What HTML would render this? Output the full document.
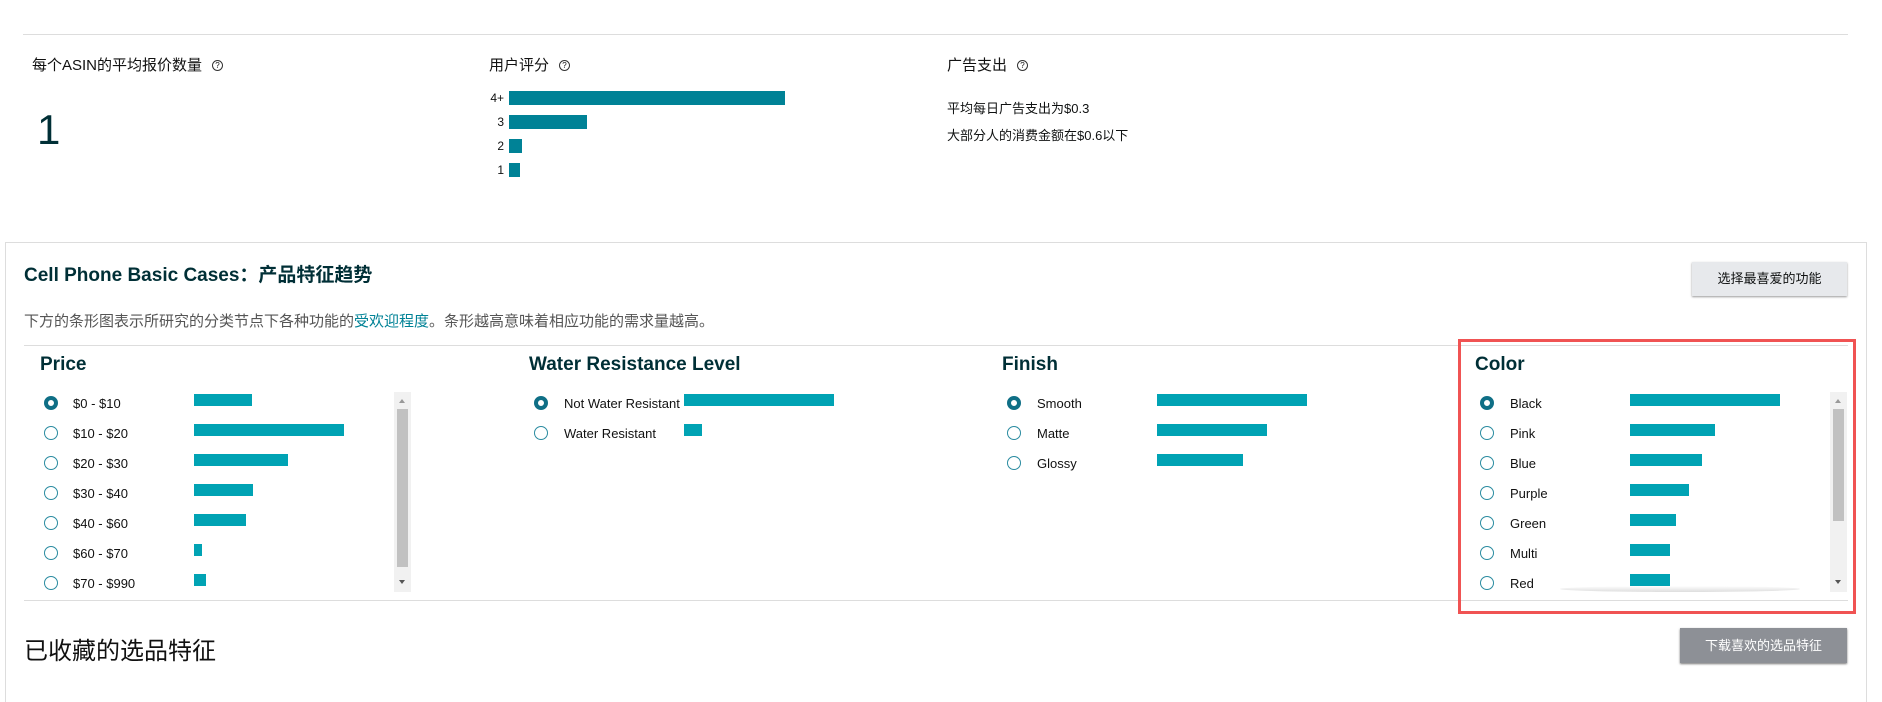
<!DOCTYPE html>
<html><head><meta charset="utf-8"><style>
*{margin:0;padding:0;box-sizing:border-box}
body{width:1882px;height:686px;background:#fff;position:relative;overflow:hidden;font-family:"Liberation Sans","Noto Sans CJK SC",sans-serif;color:#0f1111}
.a{position:absolute;white-space:nowrap}
.q{display:inline-block;width:11px;height:11px;border:1px solid #333;border-radius:50%;font-size:8px;line-height:9px;text-align:center;margin-left:10px;vertical-align:2px}
.h{font-size:15px;color:#111}
.bar{position:absolute;height:12px;background:#00a3b4}
.rb{position:absolute;height:14px;background:#008296}
.rad{position:absolute;width:14px;height:14px;border:1.5px solid #2a8ba0;border-radius:50%;background:#fff}
.rad.on{border:4px solid #0f6f86}
.lbl{position:absolute;font-size:13px;color:#111;white-space:nowrap;line-height:16px}
.ch{position:absolute;font-size:19px;font-weight:bold;color:#002f36}
.sb{position:absolute;width:17px;background:#f1f1f1}
.sb i{position:absolute;left:3px;width:11px;background:#c1c1c1}
.sb b{position:absolute;left:5px;width:0;height:0;border-left:3.5px solid transparent;border-right:3.5px solid transparent}
</style></head><body>
<div class="a" style="left:23px;top:34px;width:1825px;height:1px;background:#ddd"></div>
<div class="a h" style="left:32px;top:54px">每个ASIN的平均报价数量<span class="q">?</span></div>
<div class="a" style="left:37px;top:106px;font-size:42px;color:#002f36">1</div>
<div class="a h" style="left:489px;top:54px">用户评分<span class="q">?</span></div>
<div class="a" style="left:470px;top:91px;width:34px;text-align:right;font-size:12px;line-height:14px">4+</div>
<div class="a" style="left:470px;top:115px;width:34px;text-align:right;font-size:12px;line-height:14px">3</div>
<div class="a" style="left:470px;top:139px;width:34px;text-align:right;font-size:12px;line-height:14px">2</div>
<div class="a" style="left:470px;top:163px;width:34px;text-align:right;font-size:12px;line-height:14px">1</div>
<div class="rb" style="left:509px;top:91px;width:276px"></div>
<div class="rb" style="left:509px;top:115px;width:78px"></div>
<div class="rb" style="left:509px;top:139px;width:13px"></div>
<div class="rb" style="left:509px;top:163px;width:11px"></div>
<div class="a h" style="left:947px;top:54px">广告支出<span class="q">?</span></div>
<div class="a" style="left:947px;top:98px;font-size:13px">平均每日广告支出为$0.3</div>
<div class="a" style="left:947px;top:125px;font-size:13px">大部分人的消费金额在$0.6以下</div>

<div class="a" style="left:5px;top:242px;width:1862px;height:460px;border:1px solid #ddd;border-bottom:none"></div>
<div class="a" style="left:24px;top:260px;font-size:19px;font-weight:bold;color:#002f36">Cell Phone Basic Cases：产品特征趋势</div>
<div class="a" style="left:24px;top:310px;font-size:15px;color:#555">下方的条形图表示所研究的分类节点下各种功能的<span style="color:#008296">受欢迎程度</span>。条形越高意味着相应功能的需求量越高。</div>
<div class="a" style="left:1692px;top:262px;width:155px;height:34px;background:#e7e9ec;box-shadow:0 1px 2px #999;font-size:13px;text-align:center;line-height:34px">选择最喜爱的功能</div>
<div class="a" style="left:24px;top:345px;width:1824px;height:1px;background:#ddd"></div>
<div class="a" style="left:24px;top:600px;width:1824px;height:1px;background:#ddd"></div>

<div class="ch" style="left:40px;top:354px">Price</div>
<div class="ch" style="left:529px;top:354px">Water Resistance Level</div>
<div class="ch" style="left:1002px;top:354px">Finish</div>
<div class="ch" style="left:1475px;top:354px">Color</div>

<div class="rad on" style="left:44px;top:396px"></div><div class="lbl" style="left:73px;top:396px">$0 - $10</div><div class="bar" style="left:194px;top:394px;width:58px"></div>
<div class="rad" style="left:44px;top:426px"></div><div class="lbl" style="left:73px;top:426px">$10 - $20</div><div class="bar" style="left:194px;top:424px;width:150px"></div>
<div class="rad" style="left:44px;top:456px"></div><div class="lbl" style="left:73px;top:456px">$20 - $30</div><div class="bar" style="left:194px;top:454px;width:94px"></div>
<div class="rad" style="left:44px;top:486px"></div><div class="lbl" style="left:73px;top:486px">$30 - $40</div><div class="bar" style="left:194px;top:484px;width:59px"></div>
<div class="rad" style="left:44px;top:516px"></div><div class="lbl" style="left:73px;top:516px">$40 - $60</div><div class="bar" style="left:194px;top:514px;width:52px"></div>
<div class="rad" style="left:44px;top:546px"></div><div class="lbl" style="left:73px;top:546px">$60 - $70</div><div class="bar" style="left:194px;top:544px;width:8px"></div>
<div class="rad" style="left:44px;top:576px"></div><div class="lbl" style="left:73px;top:576px">$70 - $990</div><div class="bar" style="left:194px;top:574px;width:12px"></div>
<div class="sb" style="left:394px;top:392px;height:200px"><b style="top:7px;border-bottom:4px solid #999"></b><i style="top:17px;height:158px"></i><b style="top:188px;border-top:4px solid #555"></b></div>

<div class="rad on" style="left:534px;top:396px"></div><div class="lbl" style="left:564px;top:396px">Not Water Resistant</div><div class="bar" style="left:684px;top:394px;width:150px"></div>
<div class="rad" style="left:534px;top:426px"></div><div class="lbl" style="left:564px;top:426px">Water Resistant</div><div class="bar" style="left:684px;top:424px;width:18px"></div>

<div class="rad on" style="left:1007px;top:396px"></div><div class="lbl" style="left:1037px;top:396px">Smooth</div><div class="bar" style="left:1157px;top:394px;width:150px"></div>
<div class="rad" style="left:1007px;top:426px"></div><div class="lbl" style="left:1037px;top:426px">Matte</div><div class="bar" style="left:1157px;top:424px;width:110px"></div>
<div class="rad" style="left:1007px;top:456px"></div><div class="lbl" style="left:1037px;top:456px">Glossy</div><div class="bar" style="left:1157px;top:454px;width:86px"></div>

<div class="rad on" style="left:1480px;top:396px"></div><div class="lbl" style="left:1510px;top:396px">Black</div><div class="bar" style="left:1630px;top:394px;width:150px"></div>
<div class="rad" style="left:1480px;top:426px"></div><div class="lbl" style="left:1510px;top:426px">Pink</div><div class="bar" style="left:1630px;top:424px;width:85px"></div>
<div class="rad" style="left:1480px;top:456px"></div><div class="lbl" style="left:1510px;top:456px">Blue</div><div class="bar" style="left:1630px;top:454px;width:72px"></div>
<div class="rad" style="left:1480px;top:486px"></div><div class="lbl" style="left:1510px;top:486px">Purple</div><div class="bar" style="left:1630px;top:484px;width:59px"></div>
<div class="rad" style="left:1480px;top:516px"></div><div class="lbl" style="left:1510px;top:516px">Green</div><div class="bar" style="left:1630px;top:514px;width:46px"></div>
<div class="rad" style="left:1480px;top:546px"></div><div class="lbl" style="left:1510px;top:546px">Multi</div><div class="bar" style="left:1630px;top:544px;width:40px"></div>
<div class="rad" style="left:1480px;top:576px"></div><div class="lbl" style="left:1510px;top:576px">Red</div><div class="bar" style="left:1630px;top:574px;width:40px"></div>
<div class="a" style="left:1560px;top:586px;width:240px;height:6px;background:linear-gradient(#fff,#ddd);border-radius:50%"></div>
<div class="sb" style="left:1830px;top:392px;height:200px"><b style="top:7px;border-bottom:4px solid #999"></b><i style="top:17px;height:112px"></i><b style="top:188px;border-top:4px solid #555"></b></div>
<div class="a" style="left:1458px;top:339px;width:398px;height:275px;border:3px solid #f05353"></div>

<div class="a" style="left:24px;top:631px;font-size:24px;color:#111">已收藏的选品特征</div>
<div class="a" style="left:1680px;top:628px;width:167px;height:35px;background:#8d9096;box-shadow:0 1px 2px #777;color:#fff;font-size:13px;text-align:center;line-height:35px">下载喜欢的选品特征</div>
</body></html>
